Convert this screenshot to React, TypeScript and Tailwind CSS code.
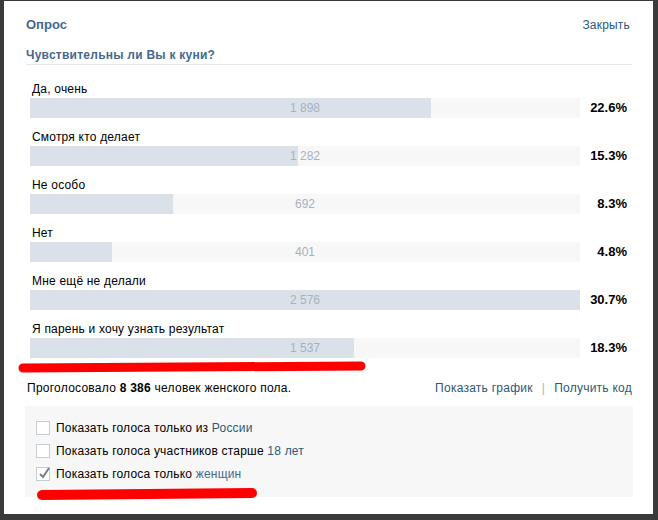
import React from "react";

const options = [
  { label: "Да, очень", count: "1 898", pct: "22.6%", fill: 401 },
  { label: "Смотря кто делает", count: "1 282", pct: "15.3%", fill: 268 },
  { label: "Не особо", count: "692", pct: "8.3%", fill: 143 },
  { label: "Нет", count: "401", pct: "4.8%", fill: 82 },
  { label: "Мне ещё не делали", count: "2 576", pct: "30.7%", fill: 550 },
  { label: "Я парень и хочу узнать результат", count: "1 537", pct: "18.3%", fill: 324 },
];

function Checkbox({ checked }: { checked?: boolean }) {
  return (
    <div className="relative w-[14px] h-[14px] border border-[#c5ccd3] bg-white shrink-0">
      {checked && (
        <svg className="absolute left-[1px] top-[-2px]" width="13" height="14" viewBox="0 0 13 14">
          <path d="M2 8 L5 11 L11 2" fill="none" stroke="#6f7f8f" strokeWidth="2" />
        </svg>
      )}
    </div>
  );
}

export default function App() {
  return (
    <div
      className="relative w-[658px] h-[520px] bg-[#3a3a3a] pl-[4px] pt-[1px] pr-[5px] pb-[6px]"
      style={{ fontFamily: '"Liberation Sans", Arial, sans-serif' }}
    >
      <div className="w-full h-full bg-white pl-[22px] pr-[21px] pt-[14px] flex flex-col">
        <div className="flex justify-between items-center h-[20px]">
          <span className="text-[13px] font-bold text-[#45688e]">Опрос</span>
          <span className="text-[12px] tracking-[0.2px] text-[#2b587a] pr-[2px]">Закрыть</span>
        </div>
        <div className="mt-[12px] pb-[1px] border-b border-[#e7e8ec]">
          <div className="h-[16px] leading-[16px] text-[12px] tracking-[0.25px] font-bold text-[#45688e]">
            Чувствительны ли Вы к куни?
          </div>
        </div>
        <div className="mt-[16px] flex flex-col">
          {options.map((o) => (
            <div key={o.label} className="flex flex-col pl-[4px] pr-[5px] mb-[11px]">
              <div className="h-[16px] leading-[16px] text-[12px] tracking-[0.2px] text-black pl-[2px]">{o.label}</div>
              <div className="mt-[1px] flex items-center">
                <div className="relative w-[550px] h-[20px] bg-[#f7f7f7]">
                  <div className="absolute left-0 top-0 h-full bg-[#dae1e8]" style={{ width: o.fill }} />
                  <div className="absolute inset-0 flex items-center justify-center text-[12px] text-[#a5b2bf]">
                    {o.count}
                  </div>
                </div>
                <div className="flex-1 text-right text-[13px] font-bold text-black">{o.pct}</div>
              </div>
            </div>
          ))}
        </div>
        <div className="mt-[11px] h-[16px] leading-[16px] flex justify-between text-[12px] tracking-[0.25px]">
          <span className="pl-[1px] text-black">
            Проголосовало <b>8 386</b> человек женского пола.
          </span>
          <span className="text-[#2b587a]">
            Показать график<span className="text-[#a8b5c2] mx-[9px]">|</span>Получить код
          </span>
        </div>
        <div className="mt-[10px] -ml-[1px] -mr-[1px] h-[91px] bg-[#f7f7f7] pl-[11px] pt-[10px] flex flex-col text-[12px] tracking-[0.2px]">
          <div className="h-[23px] flex items-center gap-[6px]">
            <Checkbox />
            <span className="text-black">
              Показать голоса только из <span className="text-[#2b587a]">России</span>
            </span>
          </div>
          <div className="h-[23px] flex items-center gap-[6px]">
            <Checkbox />
            <span className="text-black">
              Показать голоса участников старше <span className="text-[#2b587a]">18 лет</span>
            </span>
          </div>
          <div className="h-[23px] flex items-center gap-[6px]">
            <Checkbox checked />
            <span className="text-black">
              Показать голоса только <span className="text-[#45688e]">женщин</span>
            </span>
          </div>
        </div>
      </div>
      <svg className="absolute left-0 top-0 pointer-events-none" width="658" height="520">
        <path d="M23 368 Q190 367 361 366" fill="none" stroke="#ff0000" strokeWidth="9" strokeLinecap="round" />
        <path d="M42 495 Q150 494 252 493" fill="none" stroke="#ff0000" strokeWidth="10" strokeLinecap="round" />
      </svg>
    </div>
  );
}
